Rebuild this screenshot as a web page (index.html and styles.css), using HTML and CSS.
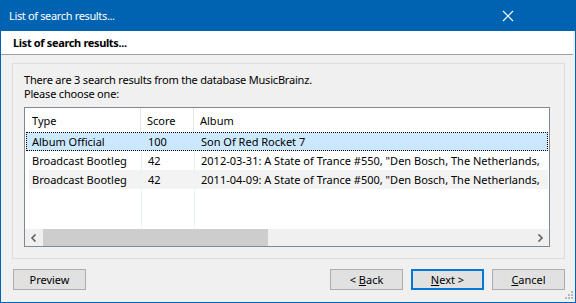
FILE: index.html
```html
<!DOCTYPE html>
<html lang="en">
<head>
    <meta charset="UTF-8">
    <title>List of search results...</title>
    <link rel="stylesheet" href="styles.css">
</head>
<body>
    <div class="window">
        <div class="titlebar">
            <span class="title">List of search results...</span>
            <svg class="close" width="12" height="12" viewBox="0 0 12 12">
                <path d="M1 1 L11 11 M11 1 L1 11" stroke="#fff" stroke-width="1.1" fill="none"/>
            </svg>
        </div>
        <div class="header">List of search results...</div>

        <div class="content">
            <div class="group">
                <div class="intro">There are 3 search results from the database MusicBrainz.</div>
                <div class="intro">Please choose one:</div>

                <div class="listbox">
                    <div class="row head">
                        <div class="cell">Type</div>
                        <div class="cell">Score</div>
                        <div class="cell">Album</div>
                    </div>
                    <div class="rows">
                        <div class="row selected">
                            <div class="cell">Album Official</div>
                            <div class="cell">100</div>
                            <div class="cell">Son Of Red Rocket 7</div>
                        </div>
                        <div class="row">
                            <div class="cell">Broadcast Bootleg</div>
                            <div class="cell">42</div>
                            <div class="cell">2012-03-31: A State of Trance #550, "Den Bosch, The Netherlands,</div>
                        </div>
                        <div class="row alt">
                            <div class="cell">Broadcast Bootleg</div>
                            <div class="cell">42</div>
                            <div class="cell">2011-04-09: A State of Trance #500, "Den Bosch, The Netherlands,</div>
                        </div>
                    </div>
                    <div class="hscroll">
                        <svg class="arrow" width="8" height="8" viewBox="0 0 8 8">
                            <path d="M5.5 0.5 L2 4 L5.5 7.5" stroke="#606060" stroke-width="1.6" fill="none"/>
                        </svg>
                        <div class="track"><div class="thumb"></div></div>
                        <svg class="arrow" width="8" height="8" viewBox="0 0 8 8">
                            <path d="M2.5 0.5 L6 4 L2.5 7.5" stroke="#606060" stroke-width="1.6" fill="none"/>
                        </svg>
                    </div>
                </div>
            </div>

            <div class="buttons">
                <button class="btn">Preview</button>
                <div class="spacer"></div>
                <button class="btn">&lt; <u>B</u>ack</button>
                <button class="btn default"><u>N</u>ext &gt;</button>
                <button class="btn"><u>C</u>ancel</button>
            </div>
            <svg class="grip" width="8" height="8" viewBox="0 0 8 8">
                <rect x="6" y="0" width="2" height="2" fill="#b8b8b8"/>
                <rect x="3" y="3" width="2" height="2" fill="#b8b8b8"/>
                <rect x="6" y="3" width="2" height="2" fill="#b8b8b8"/>
                <rect x="0" y="6" width="2" height="2" fill="#b8b8b8"/>
                <rect x="3" y="6" width="2" height="2" fill="#b8b8b8"/>
                <rect x="6" y="6" width="2" height="2" fill="#b8b8b8"/>
            </svg>
        </div>
    </div>
</body>
</html>
```

FILE: styles.css
```css
* {
    box-sizing: border-box;
}
body {
    margin: 0;
    font-family: "Noto Sans", sans-serif;
    font-size: 11px;
    letter-spacing: -0.2px;
    color: #000;
}
.window {
    width: 576px;
    height: 303px;
    border: 1px solid #0063b1;
    border-top: none;
    display: flex;
    flex-direction: column;
    background: #f0f0f0;
}
.titlebar {
    height: 31px;
    margin: 0 -1px;
    background: #0063b1;
    color: #fff;
    display: flex;
    align-items: center;
    justify-content: space-between;
    padding: 0 62px 0 9px;
}
.title {
    font-size: 11px;
    letter-spacing: -0.35px;
}
.header {
    height: 24px;
    background: #fff;
    font-weight: bold;
    letter-spacing: -0.35px;
    padding: 4px 0 0 12px;
    border-bottom: 1px solid #a0a0a0;
    margin-right: 2px;
}
.content {
    flex: 1;
    position: relative;
    padding: 8px 10px 0 11px;
}
.group {
    height: 196px;
    border: 1px solid #dcdcdc;
    padding: 9px 14px 0 11px;
}
.intro {
    height: 14px;
    line-height: 14px;
}
.intro + .intro {
    margin-bottom: 6px;
}
.listbox {
    height: 140px;
    border: 1px solid #828790;
    background: #fff;
    display: flex;
    flex-direction: column;
    overflow: hidden;
    letter-spacing: 0;
}
.row {
    display: grid;
    grid-template-columns: 112px 52px 1fr;
    column-gap: 1px;
    height: 19px;
    align-items: center;
    white-space: nowrap;
    margin: 0 1px 0 4px;
}
.cell {
    padding-left: 3px;
    height: 100%;
    display: flex;
    align-items: center;
    overflow: hidden;
}
.row .cell:nth-child(2),
.row .cell:nth-child(3) {
    padding-left: 6px;
}
.row.head {
    height: 24px;
    margin: 0;
    padding-left: 4px;
    grid-template-columns: 112px 53px 1fr;
    column-gap: 0;
}
.row.head .cell:nth-child(1),
.row.head .cell:nth-child(2) {
    border-right: 1px solid #e5e5e5;
}
.rows {
    flex: 1;
    background-image: linear-gradient(#edf2f8, #edf2f8), linear-gradient(#edf2f8, #edf2f8);
    background-size: 1px 100%, 1px 100%;
    background-position: 116px 0, 169px 0;
    background-repeat: no-repeat;
}
.row.selected {
    background: #cce8ff;
    outline: 1px dotted #000;
    outline-offset: -1px;
    margin-left: 1px;
    padding-left: 3px;
}
.row.alt .cell {
    background: #f3f3f3;
}
.hscroll {
    height: 17px;
    background: #f0f0f0;
    display: flex;
    align-items: center;
}
.arrow {
    flex: none;
    margin: 0 5px;
}
.track {
    flex: 1;
    height: 100%;
}
.thumb {
    width: 225px;
    height: 100%;
    background: #cdcdcd;
}
.buttons {
    display: flex;
    gap: 8px;
    margin-top: 10px;
    padding-left: 1px;
}
.spacer {
    flex: 1;
}
.btn {
    width: 73px;
    height: 21px;
    font-family: inherit;
    font-size: 11px;
    letter-spacing: 0;
    background: #e1e1e1;
    border: 1px solid #adadad;
    padding: 0;
    color: #000;
}
.btn.default {
    border: 2px solid #0078d7;
}
.grip {
    position: absolute;
    right: 2px;
    bottom: 3px;
}
```
